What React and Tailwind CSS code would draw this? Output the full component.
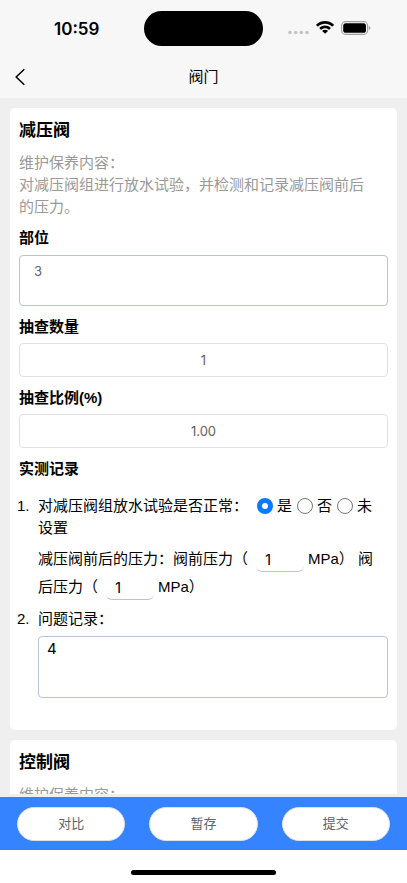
import React, { useState } from 'react';

const StatusBar = () => (
  <div className="grid grid-cols-3 items-center h-14 pt-px">
    <div className="pl-[54px] font-['Inter',sans-serif] text-[17px] leading-6 font-semibold">10:59</div>
    <div className="justify-self-center w-[119px] h-[35px] rounded-full bg-black" />
    <div className="flex items-center justify-end pr-9">
      <svg width="21" height="14" viewBox="0 0 21 14" fill="#c4c4c4" className="mr-[7px]">
        <circle cx="2" cy="10.5" r="1.8" />
        <circle cx="7.7" cy="10.5" r="1.8" />
        <circle cx="13.3" cy="10.5" r="1.8" />
        <circle cx="19" cy="10.5" r="1.8" />
      </svg>
      <svg width="18" height="13" viewBox="0 0 17.1 12.3" className="mb-0.5 mr-[7px]">
        <path d="M8.6 2.6c2.4 0 4.8.9 6.5 2.6.1.1.3.1.5 0l1.3-1.3c.1-.2.1-.4 0-.6C12.3-1.1 4.9-1.1.3 3.3c-.2.2-.2.4 0 .6l1.3 1.3c.1.1.3.1.5 0C3.8 3.5 6.2 2.6 8.6 2.6zM8.6 6.8c1.3 0 2.6.5 3.5 1.4.2.1.4.1.5 0l1.3-1.3c.2-.2.2-.4 0-.6-3-2.8-7.6-2.8-10.6 0-.2.2-.2.4 0 .6l1.3 1.3c.1.1.3.1.5 0 .9-.9 2.2-1.4 3.5-1.4zM11.2 9.6c.1-.1.1-.4-.1-.5-1.4-1.2-3.6-1.2-5 0-.2.1-.2.4 0 .5l2.3 2.3c.1.1.3.1.5 0z" />
      </svg>
      <svg width="30" height="14" viewBox="0 0 30 14" className="mb-0.5">
        <rect x="0.6" y="0.6" width="26" height="12.8" rx="4" fill="none" stroke="#a0a0a0" strokeWidth="1.1" />
        <rect x="2.2" y="2.2" width="22.8" height="9.6" rx="2.6" />
        <path d="M27.8 4.8v4.4c.9-.4 1.5-1.2 1.5-2.2s-.6-1.8-1.5-2.2z" fill="#a0a0a0" />
      </svg>
    </div>
  </div>
);

const NavBar = () => (
  <div className="grid grid-cols-3 items-center h-[42px]">
    <button type="button" aria-label="返回" className="justify-self-start pl-[15px] py-2">
      <svg width="10" height="18" viewBox="0 0 10 18" fill="none" stroke="#000" strokeWidth="1.5">
        <path d="M9.3 1.2L1.2 9l8.1 7.8" />
      </svg>
    </button>
    <h1 className="text-center text-[15px] leading-[22px]">阀门</h1>
  </div>
);

const Field = ({ id, label, value }) => (
  <div className="mt-[10px] flex flex-col gap-[5px]">
    <label htmlFor={id} className="font-bold">{label}</label>
    <input
      id={id}
      readOnly
      value={value}
      className="w-full h-[34px] rounded border border-[#dfe2ea] text-center font-['Inter',sans-serif] text-[13px] text-[#606266] outline-none"
    />
  </div>
);

const PressureInput = ({ label, value, onChange }) => (
  <input
    aria-label={label}
    value={value}
    onChange={(e) => onChange(e.target.value)}
    className="w-12 h-6 ml-2 mr-1 px-[9px] rounded-md border-b border-[#b8c4d8] align-middle font-['Inter',sans-serif] outline-none"
  />
);

const Radio = ({ checked, onChange, children }) => (
  <label>
    <input
      type="radio"
      name="result"
      checked={checked}
      onChange={onChange}
      className="appearance-none size-4 mr-1 mb-[3px] align-middle rounded-full border border-[#767676] bg-white checked:border-5 checked:border-[#0a7aff]"
    />
    {children}
  </label>
);

const Card = ({ title, content, children }) => (
  <section className="rounded-[5px] bg-white px-[9px] pt-[11px] pb-8">
    <h2 className="text-[17px] leading-6 font-bold">{title}</h2>
    <p className="mt-[9px] pr-3 text-[#999]">
      维护保养内容：
      {content && <span className="block">{content}</span>}
    </p>
    {children}
  </section>
);

const App = () => {
  const [place, setPlace] = useState('3');
  const [result, setResult] = useState('是');
  const [before, setBefore] = useState('1');
  const [after, setAfter] = useState('1');
  const [problem, setProblem] = useState('4');

  return (
    <div className="flex flex-col h-screen bg-[#efefef] font-['Liberation_Sans','Noto_Sans_CJK_SC',sans-serif] text-[15px] leading-[22px] text-black">
      <header className="shrink-0 bg-[#f7f7f7]">
        <StatusBar />
        <NavBar />
      </header>

      <main className="flex-1 min-h-0 overflow-y-auto [scrollbar-width:none] flex flex-col gap-[10px] px-[10px] pt-[10px] mb-[3px]">
        <Card title="减压阀" content="对减压阀组进行放水试验，并检测和记录减压阀前后的压力。">
          <div className="mt-[9px] flex flex-col gap-[6px]">
            <label htmlFor="place" className="font-bold">部位</label>
            <textarea
              id="place"
              value={place}
              onChange={(e) => setPlace(e.target.value)}
              className="w-full h-[51px] px-[14px] py-1 rounded border border-[#b8c4d8] resize-none font-['Inter',sans-serif] text-[13px] text-[#606266] outline-none"
            />
          </div>
          <Field id="count" label="抽查数量" value="1" />
          <Field id="ratio" label="抽查比例(%)" value="1.00" />

          <h3 className="mt-[10px] font-bold">实测记录</h3>
          <ol className="mt-[15px] flex flex-col gap-[7px]">
            <li className="flex">
              <span className="w-[17px] shrink-0 -ml-0.5 mr-1">1.</span>
              <div className="flex-1">
                <div className="pr-2">
                  <span className="mr-1">对减压阀组放水试验是否正常：</span>
                  {['是', '否', '未设置'].map((item) => (
                    <span key={item} className="ml-[5px]">
                      <Radio checked={result === item} onChange={() => setResult(item)}>{item}</Radio>
                    </span>
                  ))}
                </div>
                <p className="mt-[6px] leading-7">
                  减压阀前后的压力：阀前压力（
                  <PressureInput label="阀前压力" value={before} onChange={setBefore} />
                  MPa） 阀后压力（
                  <PressureInput label="阀后压力" value={after} onChange={setAfter} />
                  MPa）
                </p>
              </div>
            </li>
            <li className="flex">
              <span className="w-[17px] shrink-0 -ml-0.5 mr-1">2.</span>
              <div className="flex-1 flex flex-col gap-[6px]">
                <label htmlFor="problem">问题记录：</label>
                <textarea
                  id="problem"
                  value={problem}
                  onChange={(e) => setProblem(e.target.value)}
                  className="w-full h-[62px] px-2 py-px rounded border border-[#b8c4d8] resize-none font-['Inter',sans-serif] outline-none"
                />
              </div>
            </li>
          </ol>
        </Card>

        <Card title="控制阀" />
      </main>

      <footer className="shrink-0 bg-white">
        <div className="grid grid-cols-3 gap-6 px-[17px] pt-[10px] pb-[9px] bg-[#3583ff]">
          {['对比', '暂存', '提交'].map((item) => (
            <button key={item} type="button" className="h-[34px] rounded-full border border-[#dcdfe6] bg-white text-[13px] text-[#606266]">
              {item}
            </button>
          ))}
        </div>
        <div className="flex justify-center pt-5 pb-2">
          <div className="w-[145px] h-[5px] rounded-full bg-black" />
        </div>
      </footer>
    </div>
  );
};

export default App;
